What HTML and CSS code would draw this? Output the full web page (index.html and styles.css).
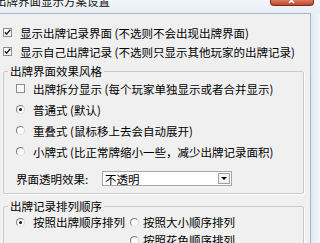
FILE: index.html
```html
<!DOCTYPE html>
<html>
<head>
<meta charset="utf-8">
<link rel="stylesheet" href="styles.css">
</head>
<body>
<div class="window">
  <div class="titlebar">
    <span class="title">出牌界面显示方案设置</span>
    <span class="close"><svg class="close-x" width="8" height="5" viewBox="0 0 8 5"><path d="M1 -2 L6 3 M6 -2 L1 3" stroke="#fff" stroke-width="1.6"/></svg></span>
  </div>
  <div class="body">
    <div class="client">
      <div class="row top">
        <svg class="cb" width="9" height="9" viewBox="0 0 9 9"><rect x="0.5" y="0.5" width="8" height="8" fill="#fff" stroke="#8c8c8c"/><path d="M1.8 4.2 L3.6 6.2 L7.3 1.8" fill="none" stroke="#1e1e1e" stroke-width="1.4"/></svg>
        <span>显示出牌记录界面 (不选则不会出现出牌界面)</span>
      </div>
      <div class="row top">
        <svg class="cb" width="9" height="9" viewBox="0 0 9 9"><rect x="0.5" y="0.5" width="8" height="8" fill="#fff" stroke="#8c8c8c"/><path d="M1.8 4.2 L3.6 6.2 L7.3 1.8" fill="none" stroke="#1e1e1e" stroke-width="1.4"/></svg>
        <span>显示自己出牌记录 (不选则只显示其他玩家的出牌记录)</span>
      </div>
      <fieldset class="group g1">
        <legend>出牌界面效果风格</legend>
        <div class="row item r-cb">
          <svg class="cb cb-in" width="9" height="9" viewBox="0 0 9 9"><rect x="0.5" y="0.5" width="8" height="8" fill="#f7f7f7" stroke="#8c8c8c"/></svg>
          <span>出牌拆分显示 (每个玩家单独显示或者合并显示)</span>
        </div>
        <div class="row item r-radio">
          <span class="radio on"></span><span>普通式 (默认)</span>
        </div>
        <div class="row item r-radio">
          <span class="radio"></span><span>重叠式 (鼠标移上去会自动展开)</span>
        </div>
        <div class="row item r-radio">
          <span class="radio"></span><span>小牌式 (比正常牌缩小一些，减少出牌记录面积)</span>
        </div>
        <div class="row item r-select">
          <span class="label">界面透明效果:</span>
          <div class="select"><span>不透明</span><span class="arrow"></span></div>
        </div>
      </fieldset>
      <fieldset class="group g2">
        <legend>出牌记录排列顺序</legend>
        <div class="order">
          <div class="row opt"><span class="radio on"></span><span>按照出牌顺序排列</span></div>
          <div class="row opt opt2"><span class="radio"></span><span>按照大小顺序排列</span></div>
          <div class="row opt opt2 second"><span class="radio"></span><span>按照花色顺序排列</span></div>
        </div>
      </fieldset>
    </div>
    <div class="edge"></div>
  </div>
</div>
</body>
</html>
```
FILE: styles.css
```css
html, body {
  margin: 0;
  padding: 0;
}
body {
  width: 320px;
  height: 243px;
  overflow: hidden;
  background: #eaf0f7;
  font-family: "Noto Sans CJK SC", sans-serif;
  font-size: 11.5px;
  color: #000;
}
.window {
  width: 320px;
  height: 243px;
  display: flex;
  flex-direction: column;
}
.titlebar {
  height: 13px;
  flex: none;
  display: flex;
  overflow: hidden;
  background: linear-gradient(#f3f6fa, #e8eef6);
}
.title {
  font-size: 11.5px;
  line-height: 12px;
  margin-top: -5px;
  margin-left: -5px;
  white-space: nowrap;
  color: #111;
}
.close {
  margin-left: auto;
  margin-right: 6px;
  width: 42px;
  height: 5px;
  background: linear-gradient(#d87a62, #c3462c);
  border: 1px solid #7a2c1c;
  border-top: none;
  border-radius: 0 0 4px 4px;
  display: flex;
  justify-content: center;
}
.close-x {
  display: block;
}
.body {
  flex: 1;
  display: flex;
  min-height: 0;
}
.client {
  width: 311px;
  flex: none;
  box-sizing: border-box;
  background: #f0f0f0;
  border-top: 1px solid #a9b6c4;
  border-right: 1px solid #a9b6c4;
  padding-top: 9px;
  overflow: hidden;
}
.edge {
  flex: 1;
  background: linear-gradient(to right, #dfe8f2, #f3f7fb);
}
.row {
  display: flex;
  align-items: center;
  height: 19px;
  line-height: 14px;
  white-space: nowrap;
}
.top {
  padding-left: 3px;
}
.cb {
  display: block;
  flex: none;
  margin-right: 8px;
}
.group {
  margin: 3px 0 0 3px;
  padding: 0 0 7px 0;
  width: 301px;
  min-width: 0;
  box-sizing: border-box;
  border: 1px solid #c9c9c9;
  border-radius: 2px;
  box-shadow: 1px 1px 0 #fff;
}
.group legend {
  margin-left: 4px;
  padding: 0 2px;
  line-height: 14px;
  height: 14px;
}
.item {
  padding-left: 12px;
  height: 21px;
}
.radio {
  flex: none;
  width: 9px;
  height: 9px;
  box-sizing: border-box;
  border-radius: 50%;
  border: 1px solid;
  border-color: #7c7c7c #d6d6d6 #e2e2e2 #7c7c7c;
  background: #fbfbfb;
  margin-right: 8px;
  display: flex;
  align-items: center;
  justify-content: center;
}
.radio.on::after {
  content: "";
  width: 3px;
  height: 3px;
  border-radius: 50%;
  background: #1a1a1a;
}
.r-select {
  height: 15px;
  margin-top: 9px;
}
.label {
  width: 86px;
  flex: none;
}
.select {
  width: 130px;
  height: 15px;
  box-sizing: border-box;
  border: 1px solid #a6a6a6;
  background: #fff;
  display: flex;
  align-items: center;
  padding-left: 2px;
  padding-right: 1px;
}
.arrow {
  margin-left: auto;
  width: 12px;
  height: 11px;
  box-sizing: border-box;
  border: 1px solid #a0a0a0;
  background: #f2f2f2;
  display: flex;
  align-items: center;
  justify-content: center;
}
.arrow::after {
  content: "";
  border-left: 3px solid transparent;
  border-right: 3px solid transparent;
  border-top: 3px solid #000;
}
.g2 {
  margin-top: 5px;
}
.order {
  display: grid;
  grid-template-columns: 114px auto;
  padding-left: 12px;
}
.opt {
  height: 18px;
}
.opt2 .radio {
  margin-right: 4px;
}
.second {
  grid-column: 2;
}
```
